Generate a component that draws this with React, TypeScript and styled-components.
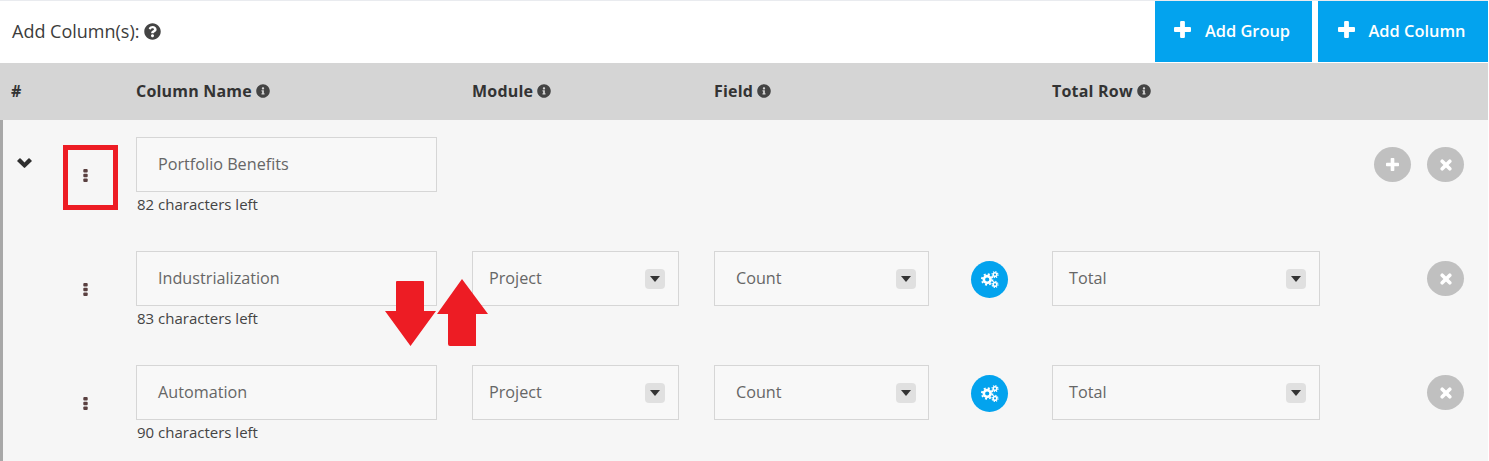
import styled, {createGlobalStyle} from "styled-components";
import {FaInfoCircle, FaQuestionCircle} from "react-icons/fa";

const GlobalStyle = createGlobalStyle`
    html, body {
        margin: 0;
        padding: 0;
        background: #fff;
    }

    body {
        font-family: "Open Sans", "Liberation Sans", sans-serif;
        color: #444;
    }
`;

const COLUMNS = "336px 242px 257px 81px 268px 1fr";

const rows = [
    {name: "Industrialization", left: "83 characters left"},
    {name: "Automation", left: "90 characters left"},
];

const PlusIcon = ({size}: { size: number }) => (
    <svg viewBox="0 0 17 17" width={size} height={size} fill="currentColor">
        <rect x="6.1" y="0" width="4.8" height="17" rx="1"/>
        <rect x="0" y="6.1" width="17" height="4.8" rx="1"/>
    </svg>
);

const TimesIcon = () => (
    <svg viewBox="0 0 12 12" width="12" height="12" fill="none" stroke="currentColor" strokeWidth="3.6" strokeLinecap="round">
        <path d="M2.2 2.2L9.8 9.8M9.8 2.2L2.2 9.8"/>
    </svg>
);

const ChevronIcon = () => (
    <svg viewBox="0 0 15 10" width="15" height="10" fill="currentColor">
        <path d="M0 3L2.4 .6Q3 0 3.6 .6L7.5 4.6L11.4 .6Q12 0 12.6 .6L15 3L8.2 9.6Q7.5 10.2 6.8 9.6Z"/>
    </svg>
);

const DotsIcon = () => (
    <svg viewBox="0 0 5 13" width="5" height="13" fill="currentColor">
        <rect x=".3" y="0" width="4.4" height="3.5" rx="1"/>
        <rect x=".3" y="4.8" width="4.4" height="3.5" rx="1"/>
        <rect x=".3" y="9.5" width="4.4" height="3.5" rx="1"/>
    </svg>
);

const CaretIcon = () => (
    <svg viewBox="0 0 10 6" width="10" height="6" fill="currentColor">
        <path d="M0 0H10L5 6Z"/>
    </svg>
);

const GearsIcon = () => (
    <svg viewBox="0 0 18 17" width="18" height="17" fill="none" stroke="currentColor">
        <circle cx="6.2" cy="8.5" r="3.4" strokeWidth="2.6"/>
        <circle cx="6.2" cy="8.5" r="5.3" strokeWidth="1.8" strokeDasharray="2 2.16"/>
        <circle cx="14" cy="3.6" r="1.8" strokeWidth="1.5"/>
        <circle cx="14" cy="3.6" r="3" strokeWidth="1.2" strokeDasharray="1.2 1.15"/>
        <circle cx="14" cy="13.4" r="1.8" strokeWidth="1.5"/>
        <circle cx="14" cy="13.4" r="3" strokeWidth="1.2" strokeDasharray="1.2 1.15"/>
    </svg>
);

const Select = ({value, width, left = 16, right = 13}: { value: string; width: number; left?: number; right?: number }) => (
    <SelectBox $width={width} $left={left} $right={right}>
        <span>{value}</span>
        <Caret><CaretIcon/></Caret>
    </SelectBox>
);

const App = () => {
    return <Page>
        <GlobalStyle/>
        <TopBar>
            <Title>Add Column(s): <FaQuestionCircle/></Title>
            <TopButtons>
                <AddButton $width={157}><PlusIcon size={17}/>Add Group</AddButton>
                <AddButton $width={170}><PlusIcon size={17}/>Add Column</AddButton>
            </TopButtons>
        </TopBar>
        <TableHead>
            <HeadFirst>#</HeadFirst>
            <HeadCell>Column Name <FaInfoCircle/></HeadCell>
            <HeadCell>Module <FaInfoCircle/></HeadCell>
            <HeadCell>Field <FaInfoCircle/></HeadCell>
            <span/>
            <HeadCell>Total Row <FaInfoCircle/></HeadCell>
        </TableHead>
        <Body>
            <GroupRow>
                <Leading>
                    <Chevron><ChevronIcon/></Chevron>
                    <Handle><DotsIcon/></Handle>
                    <HandleMarker/>
                </Leading>
                <NameCell>
                    <NameInput>Portfolio Benefits</NameInput>
                    <Helper>82 characters left</Helper>
                </NameCell>
                <Actions>
                    <RoundButton><PlusIcon size={13}/></RoundButton>
                    <RoundButton><TimesIcon/></RoundButton>
                </Actions>
            </GroupRow>
            {rows.map(row => (
                <Row key={row.name}>
                    <Leading>
                        <Handle><DotsIcon/></Handle>
                    </Leading>
                    <NameCell>
                        <NameInput>{row.name}</NameInput>
                        <Helper>{row.left}</Helper>
                    </NameCell>
                    <Select value="Project" width={207}/>
                    <Select value="Count" width={215} left={21} right={12}/>
                    <GearButton><GearsIcon/></GearButton>
                    <Select value="Total" width={268}/>
                    <Actions>
                        <RoundButton><TimesIcon/></RoundButton>
                    </Actions>
                </Row>
            ))}
            <ArrowMarks viewBox="0 0 103 67" aria-hidden="true">
                <path d="M11 3Q11 2 12 2H38Q39 2 39 3V32H51L25.5 67L0 32H11Z"/>
                <path d="M77 0L103 35H91V67H65Q63 67 63 65V35H52Z"/>
            </ArrowMarks>
        </Body>
    </Page>;
};

const Page = styled.div`
    width: 1488px;
    height: 461px;
    overflow: hidden;
    background: #fff;
`;

const TopBar = styled.div`
    display: flex;
    align-items: stretch;
    justify-content: space-between;
    height: 61px;
    border-top: 1px solid #e9ebef;
    padding-bottom: 1px;
`;

const Title = styled.div`
    display: flex;
    align-items: center;
    gap: 5px;
    padding: 0 0 1px 12px;
    font-size: 18px;
    color: #3c3c3c;

    svg {
        width: 17px;
        height: 17px;
        color: #444;
    }
`;

const TopButtons = styled.div`
    display: flex;
    gap: 6px;
`;

const AddButton = styled.div<{ $width: number }>`
    display: flex;
    align-items: center;
    justify-content: center;
    gap: 14px;
    width: ${props => props.$width}px;
    padding: 0 3px 2px 0;
    box-sizing: border-box;
    background: #03a3ee;
    color: #fff;
    font-size: 16.4px;
    font-weight: 600;

    svg {
        margin-top: -3px;
    }
`;

const TableHead = styled.div`
    display: grid;
    grid-template-columns: 136px ${COLUMNS};
    align-items: center;
    height: 57px;
    padding-bottom: 1px;
    box-sizing: border-box;
    background: #d5d5d5;
`;

const HeadFirst = styled.div`
    padding-left: 11px;
    font-size: 16px;
    font-weight: 700;
    color: #333;
`;

const HeadCell = styled.div`
    display: flex;
    align-items: center;
    gap: 4px;
    font-size: 16px;
    letter-spacing: .2px;
    font-weight: 700;
    color: #333;

    svg {
        width: 14px;
        height: 14px;
        color: #444;
    }
`;

const Body = styled.div`
    position: relative;
    height: 341px;
    background: #f6f6f6;
    border-left: 3px solid #a8a8a8;
`;

const Row = styled.div`
    display: grid;
    grid-template-columns: 133px ${COLUMNS};
    align-items: start;
    height: 114px;
    padding-top: 17px;
    box-sizing: border-box;
`;

const GroupRow = styled(Row)`
    grid-template-columns: 133px 336px 1fr;
`;

const Leading = styled.div`
    position: relative;
    height: 55px;
`;

const Chevron = styled.div`
    position: absolute;
    left: 14px;
    top: 21px;
    color: #2f2f2f;
    line-height: 0;
`;

const Handle = styled.div`
    position: absolute;
    left: 80px;
    top: 32px;
    color: #5a4040;
    line-height: 0;
`;

const HandleMarker = styled.div`
    position: absolute;
    left: 60px;
    top: 8px;
    width: 55px;
    height: 65px;
    box-sizing: border-box;
    border: 5px solid #ed1c24;
`;

const NameCell = styled.div`
    width: 301px;
`;

const NameInput = styled.div`
    display: flex;
    align-items: center;
    height: 55px;
    box-sizing: border-box;
    padding: 0 0 2px 21px;
    background: #f8f8f8;
    border: 1px solid #d6d6d6;
    font-size: 16.2px;
    color: #666;
`;

const Helper = styled.div`
    margin-top: 2px;
    padding-left: 1px;
    font-size: 15px;
    line-height: 20px;
    color: #444;
`;

const SelectBox = styled.div<{ $width: number; $left: number; $right: number }>`
    display: flex;
    align-items: center;
    justify-content: space-between;
    width: ${props => props.$width}px;
    height: 55px;
    box-sizing: border-box;
    padding: 0 ${props => props.$right}px 0 ${props => props.$left}px;
    background: #f8f8f8;
    border: 1px solid #d6d6d6;
    font-size: 16.2px;
    color: #666;

    span:first-child {
        margin-top: -2px;
    }
`;

const Caret = styled.span`
    display: flex;
    align-items: center;
    justify-content: center;
    width: 20px;
    height: 20px;
    border-radius: 4px;
    background: #e0e0e0;
    color: #333;
`;

const GearButton = styled.div`
    display: flex;
    align-items: center;
    justify-content: center;
    width: 37px;
    height: 37px;
    margin-top: 10px;
    border-radius: 50%;
    background: #03a3ee;
    color: #fff;
`;

const Actions = styled.div`
    display: flex;
    justify-content: flex-end;
    gap: 16px;
    margin: 10px 24px 0 0;
`;

const RoundButton = styled.div`
    display: flex;
    align-items: center;
    justify-content: center;
    width: 37px;
    height: 35px;
    border-radius: 50%;
    background: #c0c0c0;
    color: #fff;
`;

const ArrowMarks = styled.svg`
    position: absolute;
    left: 382px;
    top: 159px;
    width: 103px;
    height: 67px;
    fill: #ed1c24;
`;

export default App;
